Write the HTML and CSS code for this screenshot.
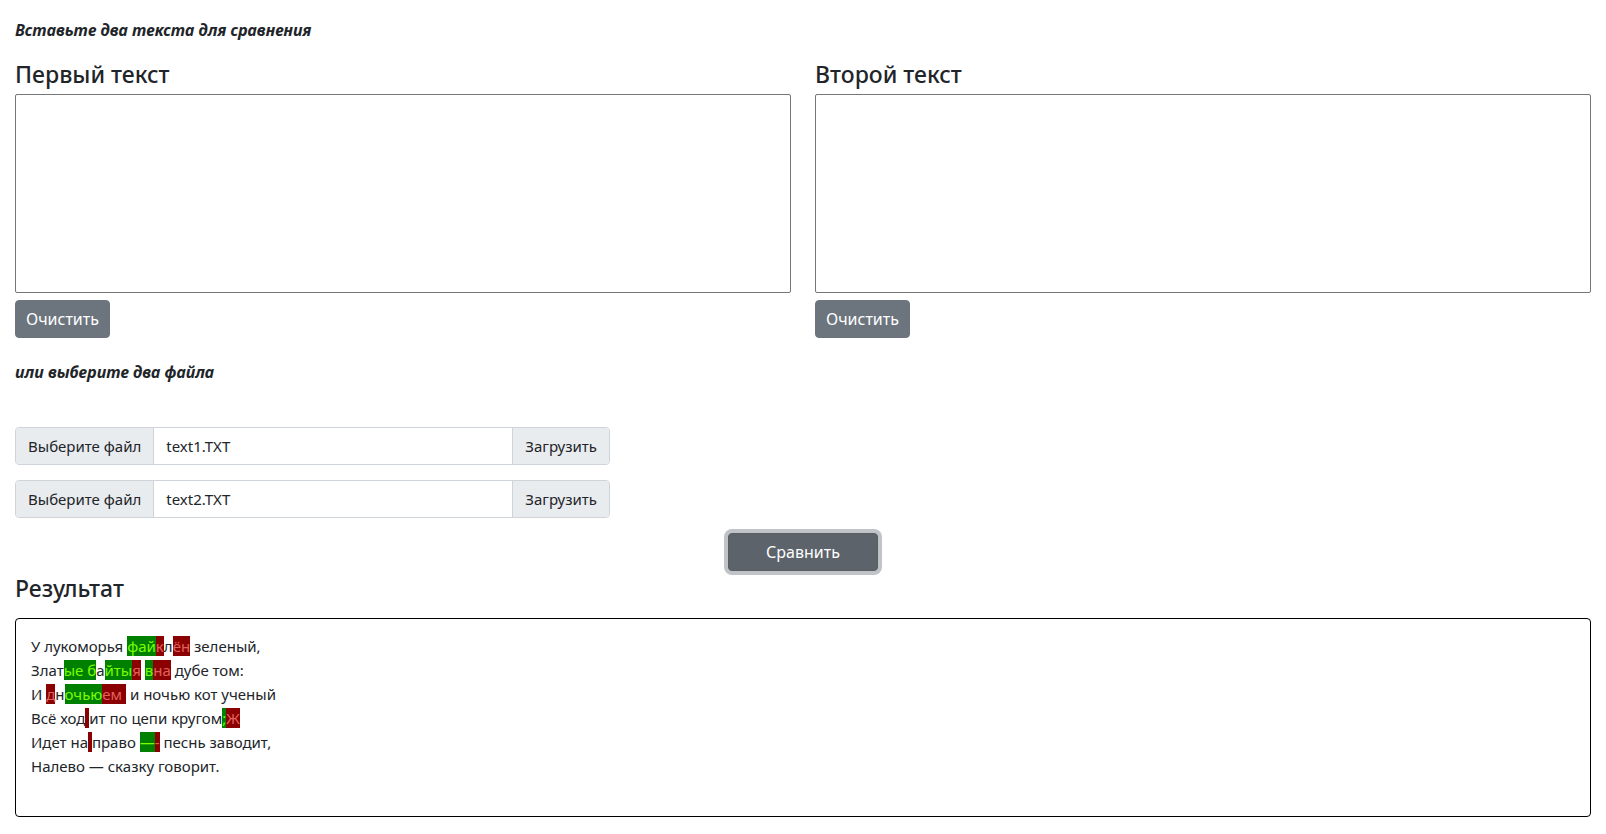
FILE: index.html
```html
<!DOCTYPE html>
<html lang="ru">

<head>
  <meta charset="UTF-8">
  <title>Сравнение текстов</title>
  <link rel="stylesheet" href="styles.css">
</head>

<body>
  <div class="page">
    <p class="hint hint-top">Вставьте два текста для сравнения</p>

    <!-- Two text inputs -->
    <div class="columns">
      <section class="column">
        <h4 class="title">Первый текст</h4>
        <textarea class="text-input" id="text1"></textarea>
        <button class="btn btn-secondary" data-clear="text1">Очистить</button>
      </section>
      <section class="column">
        <h4 class="title">Второй текст</h4>
        <textarea class="text-input" id="text2"></textarea>
        <button class="btn btn-secondary" data-clear="text2">Очистить</button>
      </section>
    </div>

    <p class="hint hint-files">или выберите два файла</p>

    <!-- File pickers -->
    <div class="file-group">
      <span class="file-button">Выберите файл</span>
      <span class="file-name">text1.TXT</span>
      <span class="file-button file-load">Загрузить</span>
    </div>
    <div class="file-group">
      <span class="file-button">Выберите файл</span>
      <span class="file-name">text2.TXT</span>
      <span class="file-button file-load">Загрузить</span>
    </div>

    <div class="compare-row">
      <button class="btn btn-compare">Сравнить</button>
    </div>

    <h4 class="title result-title">Результат</h4>
    <div class="result">У лукоморья <ins>фай</ins><del>к</del>л<del>ён</del> зеленый,
Злат<ins>ые б</ins>а<ins>йты</ins><del>я</del> <ins>в</ins><del>на</del> дубе том:
И <del>д</del>н<ins>очью</ins><del>ем </del> и ночью кот ученый
Всё ход<del> </del>ит по цепи кругом<ins>;</ins><del>Ж</del>
Идет на<del> </del>право <ins>—</ins><del>-</del> песнь заводит,
Налево — сказку говорит.</div>
  </div>

  <script>
    document.querySelectorAll('[data-clear]').forEach(function (button) {
      button.addEventListener('click', function () {
        document.getElementById(button.getAttribute('data-clear')).value = '';
      });
    });
  </script>
</body>

</html>
```

FILE: styles.css
```css
body {
  margin: 0;
  padding: 0;
  background-color: #fff;
  color: #212529;
  font-family: "Noto Sans", "Open Sans", sans-serif;
  font-size: 16px;
  line-height: 1.5;
}

.page {
  padding: 0 15px 20px;
}

.hint {
  margin: 0;
  font-size: 16px;
  line-height: 21px;
  font-weight: bold;
  font-style: italic;
}

.hint-top {
  padding-top: 20px;
}

.hint-files {
  margin-top: 24px;
  margin-bottom: 44px;
}

.columns {
  display: grid;
  grid-template-columns: 1fr 1fr;
  gap: 24px;
}

.title {
  margin: 19px 0 5px;
  font-size: 23px;
  line-height: 29px;
  font-weight: 500;
}

.text-input {
  display: block;
  width: 100%;
  height: 199px;
  margin: 0 0 7px;
  box-sizing: border-box;
  border: 1px solid #767676;
  border-radius: 2px;
  resize: none;
}

.btn {
  display: inline-block;
  padding: 6px 10px;
  font-family: inherit;
  font-size: 16px;
  line-height: 24px;
  border: 1px solid transparent;
  border-radius: 4px;
  color: #fff;
  cursor: pointer;
}

.btn-secondary {
  background-color: #6c757d;
  border-color: #6c757d;
}

.file-group {
  display: flex;
  width: 595px;
  height: 38px;
  margin-bottom: 15px;
  box-sizing: border-box;
  border: 1px solid #ced4da;
  border-radius: 4px;
  overflow: hidden;
  font-size: 15px;
}

.file-button {
  padding: 0 12px;
  line-height: 36px;
  background-color: #e9ecef;
  border-right: 1px solid #ced4da;
}

.file-name {
  flex: 1;
  padding: 0 12px;
  line-height: 36px;
}

.file-load {
  border-right: none;
  border-left: 1px solid #ced4da;
}

.compare-row {
  display: flex;
  justify-content: center;
  margin-top: 1px;
}

.btn-compare {
  width: 150px;
  background-color: #5c636a;
  border-color: #565e64;
  box-shadow: 0 0 0 4px rgba(130, 138, 145, 0.5);
}

.result-title {
  margin-top: 3px;
  margin-bottom: 15px;
}

.result {
  height: 199px;
  box-sizing: border-box;
  padding: 15px;
  border: 1px solid #000;
  border-radius: 4px;
  white-space: pre-wrap;
  font-size: 15px;
  line-height: 24px;
}

.result ins {
  text-decoration: none;
  background-color: #008000;
  color: #7cfc00;
}

.result del {
  text-decoration: none;
  background-color: #8b0000;
  color: #e0605e;
}
```
